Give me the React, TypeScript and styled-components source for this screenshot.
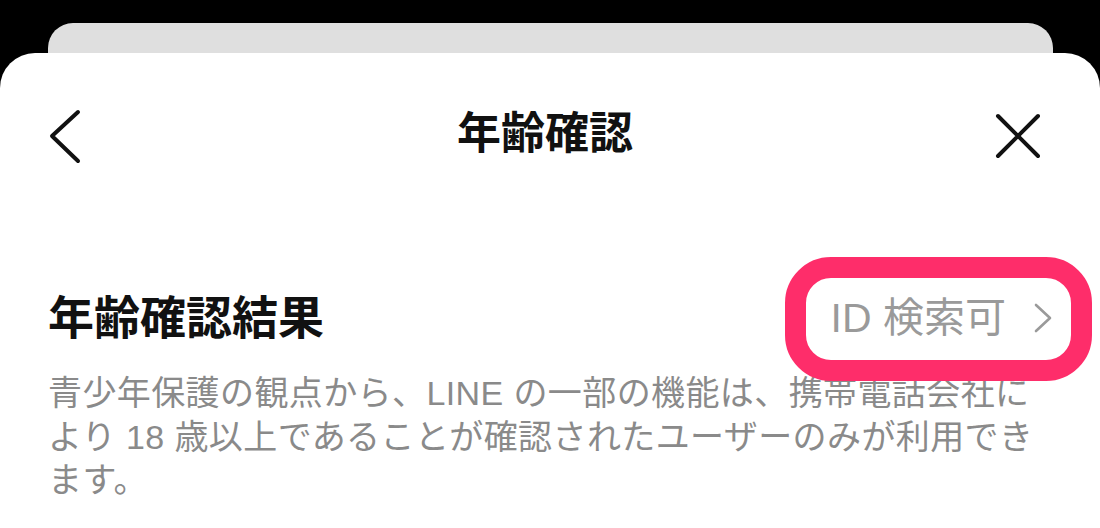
import React from "react";
import styled, { createGlobalStyle } from "styled-components";

const Global = createGlobalStyle`
  html, body { margin: 0; padding: 0; background: #000; }
  body { font-family: "Liberation Sans", "Noto Sans CJK JP", sans-serif; }
`;

const Stage = styled.div`
  width: 1100px;
  height: 528px;
  background: #000;
  overflow: hidden;
  display: flex;
  flex-direction: column;
  padding-top: 23px;
  box-sizing: border-box;
`;

const BackCard = styled.div`
  height: 30px;
  margin: 0 47px 0 48px;
  background: #dfdfdf;
  border-radius: 25px 25px 0 0;
  flex-shrink: 0;
`;

const Sheet = styled.div`
  flex: 1;
  background: #fff;
  border-radius: 35px 35px 0 0;
  display: flex;
  flex-direction: column;
`;

const Header = styled.div`
  height: 166px;
  display: grid;
  grid-template-columns: 1fr auto 1fr;
  align-items: center;
  padding: 0 58px 0 48px;
  flex-shrink: 0;
`;

const IconButton = styled.div<{ $end?: boolean }>`
  display: flex;
  justify-content: ${(p) => (p.$end ? "flex-end" : "flex-start")};
  align-items: center;
  color: #111;
`;

const Title = styled.h1`
  margin: 0;
  font-size: 44px;
  font-weight: 700;
  color: #111;
  line-height: 1;
  padding-bottom: 4px;
`;

const Section = styled.div`
  padding: 0 48px;
`;

const ResultRow = styled.div`
  margin-top: 69px;
  height: 60px;
  display: flex;
  align-items: center;
  justify-content: space-between;
`;

const Heading = styled.h2`
  margin: 0;
  font-size: 46px;
  font-weight: 700;
  color: #111;
  line-height: 1;
`;

const StatusLink = styled.div`
  position: relative;
  height: 60px;
  display: flex;
  align-items: center;
  gap: 28px;
  color: #9a9a9a;
  font-size: 41px;
  line-height: 1;
`;

const Highlight = styled.div`
  position: absolute;
  left: -46px;
  right: -40px;
  top: -31px;
  bottom: -33px;
  border: 21px solid #fe2d6a;
  border-radius: 46px;
  pointer-events: none;
`;

const Description = styled.p`
  margin: 24px 0 0;
  font-size: 34px;
  letter-spacing: 0.4px;
  line-height: 43.5px;
  color: #8a8a8a;
  white-space: nowrap;
`;

const BackIcon = () => (
  <svg width="40" height="60" viewBox="0 0 40 60" fill="none">
    <path d="M30 6 L4 30 L30 55" stroke="#111" strokeWidth="4" strokeLinecap="round" strokeLinejoin="round" />
  </svg>
);

const CloseIcon = () => (
  <svg width="48" height="48" viewBox="0 0 48 48" fill="none">
    <path d="M4 4 L44 44 M44 4 L4 44" stroke="#111" strokeWidth="4" strokeLinecap="round" />
  </svg>
);

const Chevron = () => (
  <svg width="18" height="30" viewBox="0 0 18 30" fill="none">
    <path d="M2 2 L16 15 L2 28" stroke="#9a9a9a" strokeWidth="2.6" strokeLinecap="round" strokeLinejoin="round" />
  </svg>
);

export default function App() {
  return (
    <>
      <Global />
      <Stage>
        <BackCard />
        <Sheet>
          <Header>
            <IconButton>
              <BackIcon />
            </IconButton>
            <Title>年齢確認</Title>
            <IconButton $end>
              <CloseIcon />
            </IconButton>
          </Header>
          <Section>
            <ResultRow>
              <Heading>年齢確認結果</Heading>
              <StatusLink>
                <span>ID 検索可</span>
                <Chevron />
                <Highlight />
              </StatusLink>
            </ResultRow>
            <Description>
              青少年保護の観点から、LINE の一部の機能は、携帯電話会社に
              <br />
              より 18 歳以上であることが確認されたユーザーのみが利用でき
              <br />
              ます。
            </Description>
          </Section>
        </Sheet>
      </Stage>
    </>
  );
}
